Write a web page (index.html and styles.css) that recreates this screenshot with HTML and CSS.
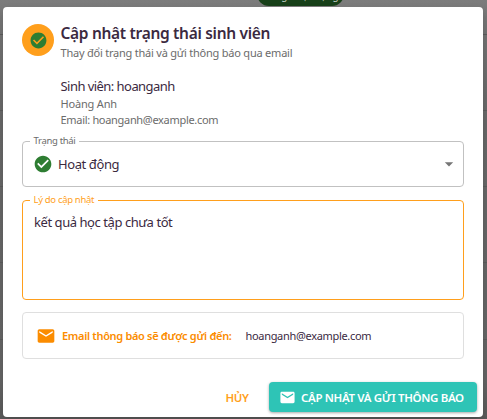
FILE: index.html
```html
<!DOCTYPE html>
<html lang="vi">
<head>
<meta charset="utf-8">
<title>Cập nhật trạng thái sinh viên</title>
<link rel="stylesheet" href="styles.css">
</head>
<body>
<div class="backdrop">
  <div class="row row-first"><span class="chip">Đang hoạt động</span></div>
  <div class="row"></div>
  <div class="row"></div>
  <div class="row"></div>
  <div class="row row-tall"></div>
  <div class="row"></div>
</div>
<main class="dialog">
  <header class="head">
    <div class="avatar">
      <svg width="19" height="19" viewBox="0 0 24 24"><path fill="#2e7d32" d="M12 2C6.48 2 2 6.48 2 12s4.48 10 10 10 10-4.48 10-10S17.52 2 12 2zm-2 15-5-5 1.41-1.41L10 14.17l7.59-7.59L19 8l-9 9z"/></svg>
    </div>
    <div>
      <h1 class="title">Cập nhật trạng thái sinh viên</h1>
      <p class="subtitle">Thay đổi trạng thái và gửi thông báo qua email</p>
    </div>
  </header>
  <section class="student">
    <p class="student-id">Sinh viên: hoanganh</p>
    <p class="student-line student-name">Hoàng Anh</p>
    <p class="student-line">Email: hoanganh@example.com</p>
  </section>
  <fieldset class="field select">
    <legend>Trạng thái</legend>
    <div class="select-row">
      <svg width="20" height="20" viewBox="0 0 24 24"><path fill="#2e7d32" d="M12 2C6.48 2 2 6.48 2 12s4.48 10 10 10 10-4.48 10-10S17.52 2 12 2zm-2 15-5-5 1.41-1.41L10 14.17l7.59-7.59L19 8l-9 9z"/></svg>
      <span class="value">Hoạt động</span>
      <svg class="caret" width="20" height="20" viewBox="0 0 24 24"><path fill="#757575" d="m7 10 5 5 5-5z"/></svg>
    </div>
  </fieldset>
  <fieldset class="field reason">
    <legend>Lý do cập nhật</legend>
    <p class="reason-text">kết quả học tập chưa tốt</p>
  </fieldset>
  <section class="notice">
    <svg width="20" height="20" viewBox="0 0 24 24"><path fill="#fb8c00" d="M20 4H4c-1.1 0-1.99.9-1.99 2L2 18c0 1.1.9 2 2 2h16c1.1 0 2-.9 2-2V6c0-1.100-.9-2-2-2zm0 4-8 5-8-5V6l8 5 8-5v2z"/></svg>
    <span class="notice-label">Email thông báo sẽ được gửi đến:</span>
    <span class="notice-mail">hoanganh@example.com</span>
  </section>
  <footer class="actions">
    <button class="cancel">HỦY</button>
    <button class="submit">
      <svg width="17" height="17" viewBox="0 0 24 24"><path fill="#fff" d="M20 4H4c-1.1 0-1.99.9-1.99 2L2 18c0 1.1.9 2 2 2h16c1.1 0 2-.9 2-2V6c0-1.100-.9-2-2-2zm0 4-8 5-8-5V6l8 5 8-5v2z"/></svg>
      <span>CẬP NHẬT VÀ GỬI THÔNG BÁO</span>
    </button>
  </footer>
</main>
</body>
</html>
```
FILE: styles.css
```css
* { box-sizing: border-box; }
body {
  margin: 0;
  width: 487px;
  height: 419px;
  overflow: hidden;
  position: relative;
  font-family: "Noto Sans", "Open Sans", sans-serif;
  color: #3b2a3f;
}
h1, p { margin: 0; }
svg { display: block; flex: none; }
.backdrop {
  height: 419px;
  overflow: hidden;
  background: linear-gradient(#7c7c7c 0, #747474 30px, #686868 120px, #656565 380px, #5a5a5a 419px);
}
.row { height: 76px; border-bottom: 1px solid #5c5c5c; }
.row-first { height: 35px; display: flex; align-items: flex-start; }
.row-tall { height: 77px; }
.chip {
  width: 87px;
  height: 24px;
  margin: -18px 0 0 257px;
  border-radius: 12px;
  background: #174019;
  color: #b8c4b8;
  font-size: 10px;
  line-height: 27px;
  text-align: center;
}
.dialog {
  position: absolute;
  left: 3px;
  top: 7px;
  width: 480px;
  height: 410px;
  padding: 16px 19px 0;
  background: #fff;
  border-radius: 4px;
  box-shadow: 0 5px 10px rgba(0,0,0,.16);
}
.head { display: flex; gap: 6.500px; height: 44px; }
.avatar {
  width: 32px;
  height: 32px;
  margin-top: 1px;
  border-radius: 50%;
  background: #ff9f1c;
  display: grid;
  place-items: center;
}
.title { font-size: 15.5px; line-height: 21px; font-weight: 600; letter-spacing: -.31px; white-space: nowrap; }
.subtitle { font-size: 11px; line-height: 17px; letter-spacing: -.22px; color: #6b6b6b; white-space: nowrap; }
.student { margin-left: 38.5px; padding-top: 9px; height: 67px; }
.student-id { font-size: 13px; line-height: 20px; letter-spacing: -.55px; }
.student-line { font-size: 11px; line-height: 16px; letter-spacing: -.31px; color: #6b6b6b; }
.student-name { letter-spacing: -.18px; }
.field { margin: 0; min-width: 0; border: 1px solid #c1c1c1; border-radius: 4px; padding: 0 4px 0 11px; }
.field legend { padding: 0 4px; margin-left: -4.500px; font-size: 9.5px; line-height: 14px; height: 14px; letter-spacing: -.32px; color: #6b6b6b; }
.select { height: 53px; }
.select-row { display: flex; align-items: center; height: 32px; margin-left: -1px; }
.value { margin-left: 5px; font-size: 13px; letter-spacing: -.4px; flex: 1; }
.reason { margin-top: 6px; height: 107px; border-color: #ff9f1c; }
.reason legend { color: #ff9f1c; }
.reason-text { font-size: 13px; line-height: 18px; letter-spacing: -.44px; padding-top: 6px; }
.notice {
  display: flex;
  align-items: center;
  height: 47px;
  margin-top: 12px;
  padding-left: 13px;
  border: 1px solid #dfdfdf;
  border-radius: 4px;
  font-size: 11px;
  letter-spacing: -.32px;
}
.notice-label { margin-left: 6px; width: 183.5px; font-weight: 600; color: #fb8c00; white-space: nowrap; }
.actions { display: flex; justify-content: flex-end; margin: 23px -13px 0 0; }
button { border: 0; background: none; padding: 0; font: 600 11.5px "Noto Sans", "Open Sans", sans-serif; letter-spacing: -.34px; }
.cancel { color: #ff9f1c; width: 64px; height: 30px; }
.submit {
  display: flex;
  align-items: center;
  gap: 5px;
  width: 208px;
  height: 30px;
  padding-left: 10px;
  border-radius: 4px;
  background: #2ec4b6;
  color: #fff;
  white-space: nowrap;
  box-shadow: 0 1px 3px rgba(0,0,0,.35);
}
```
